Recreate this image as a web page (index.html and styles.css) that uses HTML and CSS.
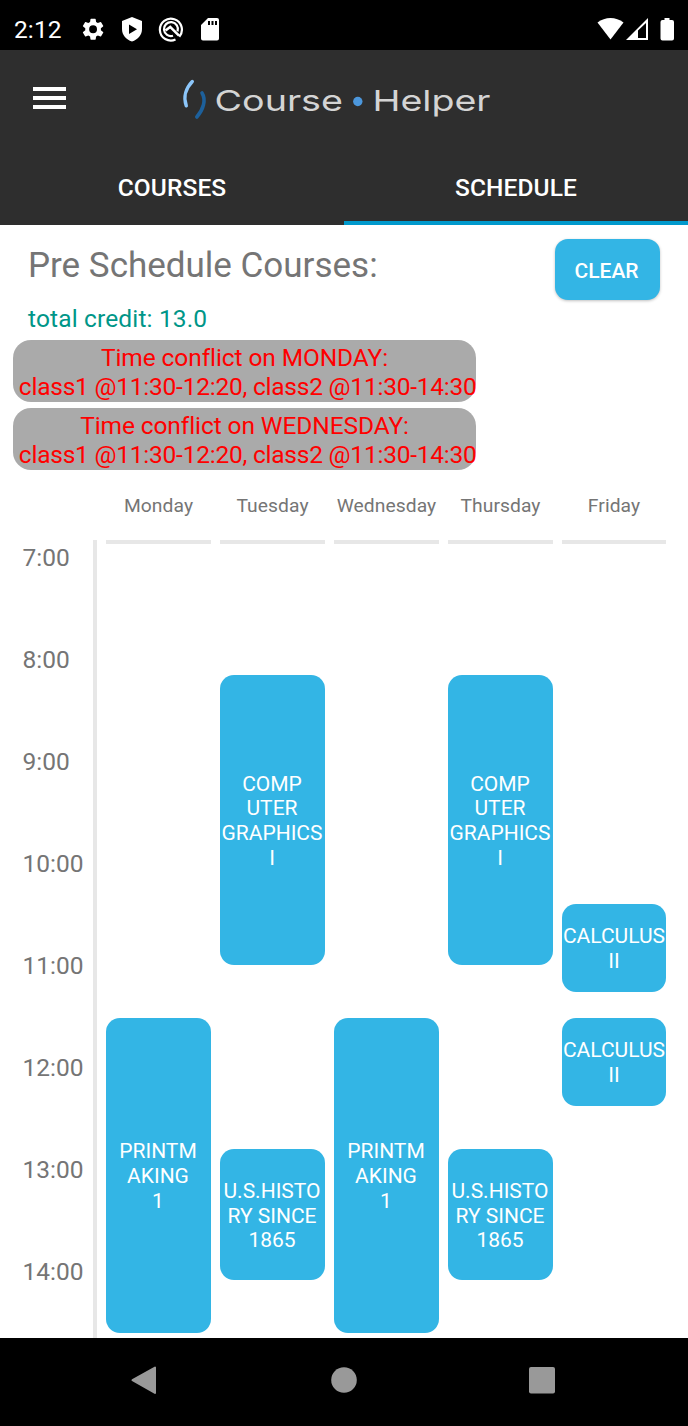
FILE: index.html
```html
<!DOCTYPE html>
<html lang="en">
<head>
<meta charset="utf-8">
<title>Course Helper</title>
<link rel="stylesheet" href="styles.css">
</head>
<body>
<header class="status">
  <span class="clock">2:12</span>
  <svg class="status-left" width="140" height="28" viewBox="80 15 140 28" fill="#fff">
    <path transform="translate(80 16.200) scale(1.09)" d="M19.140 12.940c.04-.3.06-.61.06-.94s-.02-.64-.07-.94l2.030-1.580a.49.49 0 0 0 .12-.61l-1.920-3.320a.49.49 0 0 0-.59-.22l-2.390.96a7 7 0 0 0-1.620-.94l-.36-2.540A.48.48 0 0 0 13.920 2.400h-3.840a.48.48 0 0 0-.48.41l-.36 2.540c-.59.24-1.130.57-1.620.94l-2.390-.96a.48.48 0 0 0-.59.22L2.720 8.870a.48.48 0 0 0 .12.61l2.030 1.580a6 6 0 0 0 0 1.880l-2.030 1.580a.49.49 0 0 0-.12.61l1.920 3.320c.12.22.37.29.59.22l2.390-.96c.5.38 1.030.7 1.620.94l.36 2.540c.05.24.24.41.48.41h3.840c.24 0 .44-.17.48-.41l.36-2.540c.59-.24 1.130-.56 1.620-.94l2.390.96c.22.08.47 0 .59-.22l1.920-3.320a.48.48 0 0 0-.12-.61zM12 15.600a3.600 3.600 0 1 1 0-7.200 3.600 3.600 0 0 1 0 7.200z"/>
    <path fill-rule="evenodd" d="M132 17l10 4v8c0 6-4 10.500-10 12.500-6-2-10-6.500-10-12.500v-8zM129 24.500v9.500l8-4.700z"/>
    <g fill="none" stroke="#fff">
      <path stroke-width="2.200" d="M175.500 39.600a11 11 0 1 1 3.800-2.900"/>
      <path stroke-width="2.200" d="M173 35.800a7 7 0 1 1 4.600-4.500"/>
      <path stroke-width="2.600" d="M165.500 30.500l4.700-3.600 8.800 8.800"/>
    </g>
    <path fill-rule="evenodd" d="M208 18h9a2 2 0 0 1 2 2v18.500a2 2 0 0 1-2 2h-14a2 2 0 0 1-2-2V25zM208 21v4h2v-4zM211.500 21v4h2v-4zM215 21v4h2v-4z"/>
  </svg>
  <svg class="status-right" width="78" height="26" viewBox="597 16 78 26" fill="#fff">
    <path d="M597.500 22.500c7.500-6 18.500-6 26 0L610.500 39.500z"/>
    <path fill-rule="evenodd" d="M626 40l22-22v22zM638 30.500V38h8V23z"/>
    <path d="M664.500 18h5v2h2.500a2 2 0 0 1 2 2v16.500a2 2 0 0 1-2 2h-9.500a2 2 0 0 1-2-2V22a2 2 0 0 1 2-2h2z"/>
  </svg>
</header>

<div class="appbar">
  <div class="burger"><i></i><i></i><i></i></div>
  <svg class="logo" width="320" height="50" viewBox="175 75 320 50">
    <path d="M192.300 81.500C186 88 183 97 186.300 105.800" fill="none" stroke="#8cc6fa" stroke-width="3.400" stroke-linecap="round"/>
    <path d="M202 93C206.500 100 203 110 196.800 117" fill="none" stroke="#1d609b" stroke-width="3.600" stroke-linecap="round"/>
    <text class="logo-text" x="214.500" y="111" textLength="128.500" lengthAdjust="spacingAndGlyphs">Course</text>
    <circle cx="357.800" cy="101.500" r="4.700" fill="#4c97dc"/>
    <text class="logo-text" x="372.500" y="111" textLength="118" lengthAdjust="spacingAndGlyphs">Helper</text>
  </svg>
</div>

<nav class="tabs">
  <div class="tab">COURSES</div>
  <div class="tab active">SCHEDULE</div>
</nav>

<main class="content">
  <div class="heading">
    <div>
      <h1 class="title">Pre Schedule Courses:</h1>
      <p class="credit">total credit: 13.0</p>
    </div>
    <button class="clear">CLEAR</button>
  </div>
  <div class="conflict">Time conflict on MONDAY:<br><span class="times">&nbsp;class1 @11:30-12:20, class2 @11:30-14:30</span></div>
  <div class="conflict">Time conflict on WEDNESDAY:<br><span class="times">&nbsp;class1 @11:30-12:20, class2 @11:30-14:30</span></div>

  <div class="schedule">
    <div class="hours">
      <span>7:00</span><span>8:00</span><span>9:00</span><span>10:00</span><span>11:00</span><span>12:00</span><span>13:00</span><span>14:00</span>
    </div>
    <div class="day">
      <div class="name">Monday</div>
      <div class="course print">PRINTM<br>AKING<br>1</div>
    </div>
    <div class="day">
      <div class="name">Tuesday</div>
      <div class="course graphics">COMP<br>UTER<br>GRAPHICS<br>I</div>
      <div class="course history">U.S.HISTO<br>RY SINCE<br>1865</div>
    </div>
    <div class="day">
      <div class="name">Wednesday</div>
      <div class="course print">PRINTM<br>AKING<br>1</div>
    </div>
    <div class="day">
      <div class="name">Thursday</div>
      <div class="course graphics">COMP<br>UTER<br>GRAPHICS<br>I</div>
      <div class="course history">U.S.HISTO<br>RY SINCE<br>1865</div>
    </div>
    <div class="day friday">
      <div class="name">Friday</div>
      <div class="course calculus">CALCULUS<br>II</div>
      <div class="course calculus later">CALCULUS<br>II</div>
    </div>
  </div>
</main>

<footer class="navbar">
  <svg width="688" height="88" viewBox="0 1338 688 88" fill="#999">
    <path d="M132.500 1380.200L155 1367.500v25.500z" stroke="#999" stroke-width="2" stroke-linejoin="round"/>
    <circle cx="344" cy="1380" r="12.800"/>
    <rect x="529" y="1367" width="26" height="26.500" rx="2"/>
  </svg>
</footer>
</body>
</html>
```

FILE: styles.css
```css
* { box-sizing: border-box; }
body {
  margin: 0;
  width: 688px;
  height: 1426px;
  overflow: hidden;
  display: flex;
  flex-direction: column;
  font-family: Roboto, sans-serif;
  font-size: 24.5px;
  color: #757575;
  background: #fff;
}
.status {
  height: 50px;
  flex: none;
  background: #000;
  color: #fff;
  display: flex;
  align-items: flex-start;
  padding: 15px 13px 0 14px;
}
.clock { width: 66px; font-size: 24.5px; line-height: 30px; letter-spacing: .1px; }
.status-right { margin: 1px 0 0 auto; }
.appbar {
  height: 100px;
  flex: none;
  background: #2e2e2e;
  display: flex;
  align-items: flex-start;
  padding: 25px 0 0 32.500px;
}
.burger { display: flex; flex-direction: column; gap: 5px; width: 33px; margin: 12px 109.500px 0 0; }
.burger i { height: 4px; background: #fff; }
.logo-text { font-family: Inter, sans-serif; font-size: 29px; font-weight: 400; fill: #d4d4d4; }
.tabs {
  height: 75px;
  flex: none;
  display: flex;
  background: #2e2e2e;
  color: #fff;
  font-weight: 500;
}
.tab { flex: 1; text-align: center; line-height: 76px; letter-spacing: .1px; }
.active { border-bottom: 4px solid #0099cc; }
.content { height: 1113px; flex: none; overflow: hidden; }
.heading { display: flex; justify-content: space-between; height: 115px; padding: 14px 28px 0; }
.title { margin: 5px 0 0; font-size: 35px; line-height: 44px; font-weight: 400; }
.credit { margin: 16px 0 0; line-height: 29px; letter-spacing: .15px; color: #009688; }
.clear {
  width: 105px;
  height: 61px;
  padding: 2px 2px 0 0;
  border: 0;
  border-radius: 13px;
  background: #33b5e5;
  color: #fff;
  font: 500 21px Roboto, sans-serif;
  box-shadow: 0 1px 3px rgba(0, 0, 0, .25);
}
.conflict {
  width: 463px;
  height: 62px;
  margin: 0 0 6px 13px;
  padding-top: 4px;
  border-radius: 18px;
  background: #aaa;
  color: #f00;
  text-align: center;
  line-height: 28.500px;
  letter-spacing: -.1px;
  white-space: nowrap;
}
.times { letter-spacing: -.23px; }
.schedule { display: flex; gap: 9px; height: 862px; }
.hours {
  width: 97px;
  height: 798px;
  margin-top: 64px;
  padding-left: 22.500px;
  border-right: 4px solid #e7e7e7;
  display: flex;
  flex-direction: column;
}
.hours span { flex: none; height: 102px; line-height: 36px; }
.day { width: 105px; }
.friday { width: 104px; }
.name {
  height: 68px;
  padding-top: 18px;
  border-bottom: 4px solid #e7e7e7;
  text-align: center;
  font-size: 19.250px;
  line-height: 24px;
  letter-spacing: .08px;
}
.course {
  display: flex;
  align-items: center;
  justify-content: center;
  padding: 2px 1px 0 0;
  text-align: center;
  border-radius: 14px;
  background: #33b5e5;
  color: #fff;
  font-size: 21px;
  line-height: 24.700px;
  white-space: nowrap;
}
.print { height: 315px; margin-top: 474px; }
.graphics { height: 290px; margin-top: 131px; }
.history { height: 131px; margin-top: 184px; padding-top: 3px; }
.calculus { height: 88px; margin-top: 360px; padding-right: 0; }
.later { margin-top: 26px; }
.navbar { height: 88px; flex: none; background: #000; }
```
